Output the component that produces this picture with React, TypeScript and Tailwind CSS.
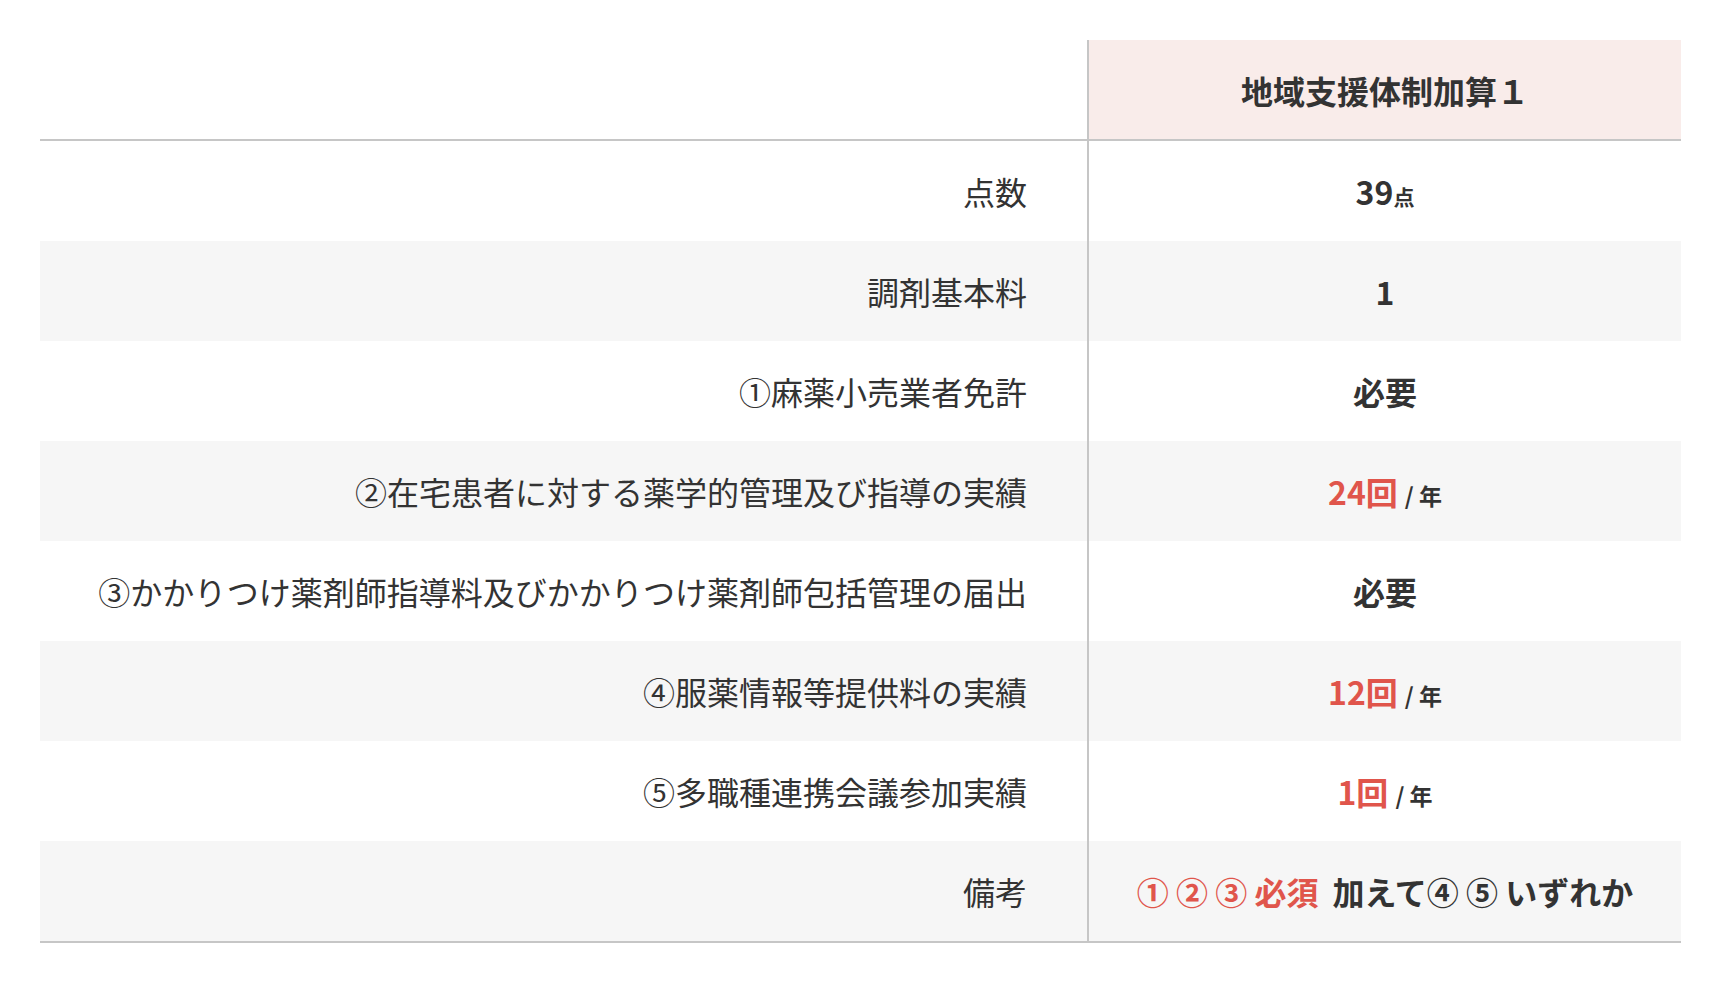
const rows: { label: string; value: React.ReactNode }[] = [
  {
    label: "点数",
    value: (
      <>
        39<span className="text-[21px]">点</span>
      </>
    ),
  },
  { label: "調剤基本料", value: "1" },
  { label: "①麻薬小売業者免許", value: "必要" },
  { label: "②在宅患者に対する薬学的管理及び指導の実績", value: <PerYear n="24回" /> },
  { label: "③かかりつけ薬剤師指導料及びかかりつけ薬剤師包括管理の届出", value: "必要" },
  { label: "④服薬情報等提供料の実績", value: <PerYear n="12回" /> },
  { label: "⑤多職種連携会議参加実績", value: <PerYear n="1回" /> },
  {
    label: "備考",
    value: (
      <>
        <span className="text-[#e0554b]">① ② ③ 必須</span>
        <span className="ml-[14px]">加えて④ ⑤ いずれか</span>
      </>
    ),
  },
];

function PerYear({ n }: { n: string }) {
  return (
    <>
      <span className="text-[#e0554b]">{n}</span>
      <span className="ml-[7px] text-[23px]">/ 年</span>
    </>
  );
}

export default function App() {
  return (
    <div className="min-h-screen bg-white px-10 pt-10 font-['Noto_Sans_CJK_JP',sans-serif] text-[#333]">
      <div className="w-[1641px]">
        <div className="grid grid-cols-[1047px_594px] border-b-2 border-[#c6c6c6]">
          <div />
          <div className="flex h-[99px] items-center justify-center border-l-2 border-[#c6c6c6] bg-[#f9ecea] text-[32px] font-bold">
            地域支援体制加算１
          </div>
        </div>
        {rows.map((r, i) => (
          <div
            key={r.label}
            className={
              "grid grid-cols-[1047px_594px] " +
              (i % 2 === 1 ? "bg-[#f6f6f6] " : "bg-white ") +
              (i === rows.length - 1 ? "h-[102px] border-b-2 border-[#c6c6c6]" : "h-[100px]")
            }
          >
            <div className="flex items-center justify-end pr-[60px] text-[32px]">{r.label}</div>
            <div className="flex items-center justify-center border-l-2 border-[#c6c6c6] text-[32px] font-bold">
              <div>{r.value}</div>
            </div>
          </div>
        ))}
      </div>
    </div>
  );
}
